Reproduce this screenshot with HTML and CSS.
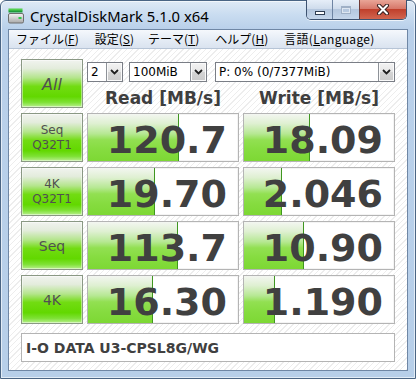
FILE: index.html
```html
<!DOCTYPE html>
<html>
<head>
<meta charset="utf-8">
<link rel="stylesheet" href="styles.css">
</head>
<body>
<div class="window">
  <div class="titlebar">
    <svg class="app-icon" width="16" height="16" viewBox="0 0 16 16">
      <defs>
        <linearGradient id="gbody" x1="0" y1="0" x2="0" y2="1">
          <stop offset="0" stop-color="#f4f4f4"/>
          <stop offset="1" stop-color="#a9a9a9"/>
        </linearGradient>
      </defs>
      <rect x="0.5" y="0.5" width="14" height="2.5" fill="#52cf4e"/>
      <rect x="0.5" y="2.5" width="14" height="2" fill="#1f9b3b"/>
      <rect x="0.5" y="5.5" width="15" height="9.5" rx="1.5" fill="url(#gbody)" stroke="#6e6e6e"/>
      <rect x="10.5" y="9" width="3" height="2" fill="#2fc84a"/>
    </svg>
    <span class="title">CrystalDiskMark 5.1.0 x64</span>
    <div class="caption-buttons">
      <div class="cb cb-min"><span class="glyph-min"></span></div>
      <div class="cb cb-max"><span class="glyph-max"></span></div>
      <div class="cb cb-close">
        <svg width="14" height="11" viewBox="0 0 14 11">
          <path d="M3 1.5 L11 9.5 M11 1.5 L3 9.5" stroke="#3a2020" stroke-width="4" stroke-linecap="round"/>
          <path d="M3 1.5 L11 9.5 M11 1.5 L3 9.5" stroke="#ffffff" stroke-width="2" stroke-linecap="round"/>
        </svg>
      </div>
    </div>
  </div>
  <div class="client">
    <div class="menubar">
      <span class="menu-item">ファイル(<u>F</u>)</span>
      <span class="menu-item">設定(<u>S</u>)</span>
      <span class="menu-item">テーマ(<u>T</u>)</span>
      <span class="menu-item">ヘルプ(<u>H</u>)</span>
      <span class="menu-item">言語(<u>L</u>anguage)</span>
    </div>
    <div class="content">
      <div class="grid">
        <div class="btn btn-all">All</div>
        <div class="top-area">
          <div class="selects">
            <div class="combo combo-count"><span class="combo-text">2</span><span class="combo-arrow"><svg width="9" height="6" viewBox="0 0 9 6"><path d="M1 1 L4.5 4.5 L8 1" fill="none" stroke="#1e1e1e" stroke-width="1.8"/></svg></span></div>
            <div class="combo combo-size"><span class="combo-text">100MiB</span><span class="combo-arrow"><svg width="9" height="6" viewBox="0 0 9 6"><path d="M1 1 L4.5 4.5 L8 1" fill="none" stroke="#1e1e1e" stroke-width="1.8"/></svg></span></div>
            <div class="combo combo-drive"><span class="combo-text">P: 0% (0/7377MiB)</span><span class="combo-arrow"><svg width="9" height="6" viewBox="0 0 9 6"><path d="M1 1 L4.5 4.5 L8 1" fill="none" stroke="#1e1e1e" stroke-width="1.8"/></svg></span></div>
          </div>
          <div class="headers">
            <div class="col-head">Read [MB/s]</div>
            <div class="col-head">Write [MB/s]</div>
          </div>
        </div>

        <div class="btn btn-two"><span>Seq</span><span>Q32T1</span></div>
        <div class="val"><div class="bar" style="width:91px"></div><span class="num">120.7</span></div>
        <div class="val"><div class="bar" style="width:66px"></div><span class="num">18.09</span></div>

        <div class="btn btn-two"><span>4K</span><span>Q32T1</span></div>
        <div class="val"><div class="bar" style="width:67px"></div><span class="num">19.70</span></div>
        <div class="val"><div class="bar" style="width:38px"></div><span class="num">2.046</span></div>

        <div class="btn btn-one">Seq</div>
        <div class="val"><div class="bar" style="width:90px"></div><span class="num">113.7</span></div>
        <div class="val"><div class="bar" style="width:60px"></div><span class="num">10.90</span></div>

        <div class="btn btn-one">4K</div>
        <div class="val"><div class="bar" style="width:65px"></div><span class="num">16.30</span></div>
        <div class="val"><div class="bar" style="width:31px"></div><span class="num">1.190</span></div>
      </div>
      <div class="comment">I-O DATA U3-CPSL8G/WG</div>
    </div>
  </div>
</div>
</body>
</html>
```
FILE: styles.css
```css
* { box-sizing: border-box; }
html, body { margin: 0; padding: 0; background: #ffffff; }

.window {
  width: 416px;
  height: 379px;
  border: 1px solid #4a6584;
  border-radius: 6px 6px 0 0;
  padding: 0 7px 7px 7px;
  display: flex;
  flex-direction: column;
  background: linear-gradient(180deg, #dfeaf6 0px, #c9dcf0 14px, #b9d0ea 28px, #b7cfe9 100%);
  box-shadow: inset 0 0 0 1px rgba(255,255,255,0.6);
}

.titlebar {
  height: 28px;
  display: flex;
  align-items: center;
  flex: none;
}
.app-icon { flex: none; margin-top: 1px; }
.title {
  margin-left: 6px;
  font-family: "Noto Sans", sans-serif;
  font-size: 14.8px;
  color: #000;
  margin-top: 1px;
}
.caption-buttons {
  margin-left: auto;
  margin-right: 1px;
  align-self: flex-start;
  margin-top: -1px;
  display: flex;
  height: 20px;
  border: 1px solid #3d5270;
  border-top: none;
  border-radius: 0 0 5px 5px;
  overflow: hidden;
  box-shadow: 0 1px 0 rgba(255,255,255,0.7);
}
.cb {
  height: 19px;
  display: flex;
  align-items: center;
  justify-content: center;
}
.cb-min {
  width: 26px;
  background: linear-gradient(180deg, #e6eef8 0%, #cfdcec 45%, #b5c7de 50%, #c4d5ea 100%);
  border-right: 1px solid #6e84a3;
}
.cb-max {
  width: 27px;
  background: linear-gradient(180deg, #e6eef8 0%, #cfdcec 45%, #b5c7de 50%, #c4d5ea 100%);
  border-right: 1px solid #6e3a36;
}
.cb-close {
  width: 46px;
  background: linear-gradient(180deg, #e9a597 0%, #d7786a 45%, #c0402c 50%, #d2654f 100%);
}
.glyph-min {
  width: 10px;
  height: 4px;
  background: #fff;
  border: 1px solid #2f3d52;
  margin-top: 6px;
}
.glyph-max {
  width: 10px;
  height: 8px;
  border: 1px solid #9fb0c6;
  border-top-width: 2px;
  background: transparent;
  box-shadow: inset 0 0 0 1px #dde6f1;
}

.client {
  flex: 1;
  border: 1px solid #6f87a5;
  background: #fff;
  display: flex;
  flex-direction: column;
}

.menubar {
  height: 19px;
  flex: none;
  display: flex;
  align-items: center;
  padding-left: 7px;
  background: linear-gradient(180deg, #f5f8fc 0%, #e6edf6 50%, #dae3ef 100%);
  border-bottom: 1px solid #b6c4d6;
  font-family: "Noto Sans CJK JP", "Noto Sans", sans-serif;
  font-size: 12px;
  color: #000;
  line-height: 18px;
}
.menu-item { margin-right: 16px; white-space: nowrap; }
.menu-item:nth-child(2) { margin-right: 14px; }
.menu-item:nth-child(3) { margin-right: 16px; }
.menu-item:nth-child(4) { margin-right: 16px; }
.menu-item:nth-child(5) { letter-spacing: 0.3px; }
.menu-item u { text-underline-offset: 1px; }

.content {
  flex: 1;
  padding: 10px 12px 0 12px;
  background-color: #ffffff;
  background-image: repeating-linear-gradient(135deg, #ffffff 0px, #ffffff 3px, #ededed 3px, #ededed 4px);
}

.grid {
  display: grid;
  grid-template-columns: 62px 152px 152px;
  grid-template-rows: 49px 49px 49px 49px 49px;
  column-gap: 4px;
  row-gap: 5px;
}

.btn {
  border: 1px solid #8a9884;
  background: linear-gradient(180deg, #f1f3ef 0%, #e3ecdc 18%, #b4e58c 38%, #72dc12 56%, #62d800 78%, #7ee135 90%, #b9ef8f 100%);
  box-shadow: inset 0 0 0 1px rgba(255,255,255,0.45);
  display: flex;
  flex-direction: column;
  align-items: center;
  justify-content: center;
  font-family: "DejaVu Sans", sans-serif;
  color: #505050;
}
.btn-all { font-size: 16px; font-style: italic; padding-top: 1px; }
.btn-two { font-size: 12px; line-height: 15px; padding-top: 1px; }
.btn-one { font-size: 14px; }

.top-area {
  grid-column: 2 / 4;
  display: flex;
  flex-direction: column;
}
.selects {
  display: flex;
  margin-top: 3px;
  height: 20px;
}
.combo {
  height: 20px;
  border: 1px solid #7a7e86;
  background: #fff;
  display: flex;
  align-items: center;
  font-family: "DejaVu Sans", sans-serif;
  font-size: 12px;
  color: #000;
}
.combo-count { width: 36px; margin-right: 6px; }
.combo-size { width: 78px; margin-right: 8px; }
.combo-drive { width: 180px; }
.combo-text { flex: 1; padding-left: 3px; white-space: nowrap; overflow: hidden; }
.combo-arrow {
  width: 16px;
  height: 18px;
  border-left: 1px solid #8e9298;
  background: linear-gradient(180deg, #f3f3f3 0%, #e6e6e6 50%, #d4d4d4 52%, #cbcbcb 100%);
  display: flex;
  align-items: center;
  justify-content: center;
  box-shadow: inset 0 0 0 1px #fafafa;
}

.headers {
  display: grid;
  grid-template-columns: 152px 152px;
  column-gap: 4px;
  margin-top: 6px;
}
.col-head {
  text-align: center;
  font-family: "DejaVu Sans", sans-serif;
  font-weight: bold;
  font-size: 17px;
  line-height: 20px;
  color: #3e3e3e;
}

.val {
  display: grid;
  border: 1px solid #b4b4b4;
  background: #fff;
  box-shadow: inset 0 0 0 1px #f4f4f4;
}
.val > * { grid-area: 1 / 1; }
.bar {
  justify-self: start;
  height: 100%;
  background: linear-gradient(180deg, #f3f6f1 0%, #dff0d2 20%, #b6e893 42%, #92e052 55%, #86dc40 75%, #7dd834 100%);
  border-right: 1px solid #3f9620;
}
.num {
  justify-self: end;
  align-self: center;
  margin-right: 11px;
  margin-top: 5px;
  font-family: "DejaVu Sans", sans-serif;
  font-weight: bold;
  font-size: 38px;
  line-height: 38px;
  color: #404040;
}

.comment {
  margin-top: 9px;
  width: 374px;
  height: 29px;
  border: 1px solid #b4b4b4;
  background: #fff;
  display: flex;
  align-items: center;
  padding-left: 4px;
  font-family: "DejaVu Sans", sans-serif;
  font-weight: bold;
  font-size: 14px;
  color: #404040;
}
```
